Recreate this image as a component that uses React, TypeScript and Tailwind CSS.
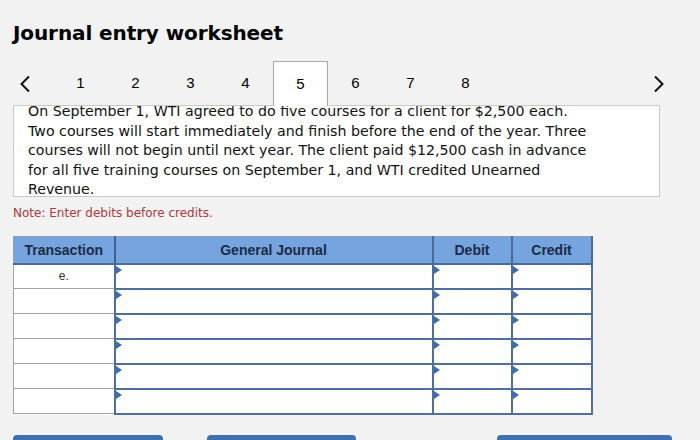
import React from "react";

const tabs = [1, 2, 3, 4, 5, 6, 7, 8];
const rows = ["e.", "", "", "", "", ""];

function Flag() {
  return (
    <span className="absolute left-0 top-[1px] w-0 h-0 border-y-[4px] border-y-transparent border-l-[6px] border-l-[#3b6bb0]" />
  );
}

export default function App() {
  return (
    <div className="w-[700px] h-[440px] overflow-hidden bg-[#f2f2f2] px-[13px] pt-[20px] text-black">
      {/* Title */}
      <h1 className="font-['DejaVu_Sans',sans-serif] font-bold text-[20px] leading-[26px] tracking-[-0.1px]">
        Journal entry worksheet
      </h1>

      {/* Step tabs */}
      <div className="mt-[15px] flex items-end h-[44px] font-['Liberation_Sans',Arial,sans-serif] text-[15px]">
        <div className="w-[40px] h-[44px] flex items-center pl-[6px]">
          <svg width="12" height="18" viewBox="0 0 12 18" className="mt-[2px]">
            <path d="M10 1.5 L2.5 9 L10 16.5" fill="none" stroke="#111" strokeWidth="2" />
          </svg>
        </div>
        {tabs.map((t) =>
          t === 5 ? (
            <div
              key={t}
              className="relative z-10 w-[55px] h-[45px] -mb-[1px] bg-white border border-b-0 border-[#a9a9a9] flex items-center justify-center"
            >
              {t}
            </div>
          ) : (
            <div key={t} className="w-[55px] h-[44px] flex items-center justify-center">
              {t}
            </div>
          )
        )}
        <div className="flex-1" />
        <div className="w-[40px] h-[44px] flex items-center justify-end pr-[22px]">
          <svg width="12" height="18" viewBox="0 0 12 18" className="mt-[2px] shrink-0">
            <path d="M2 1.5 L9.5 9 L2 16.5" fill="none" stroke="#111" strokeWidth="2" />
          </svg>
        </div>
      </div>

      {/* Problem text */}
      <div className="w-[647px] h-[92px] overflow-hidden bg-white border border-[#c9c9c9] pl-[14px] font-['DejaVu_Sans',Verdana,sans-serif] text-[14.2px] leading-[19.5px] text-[#111]">
        <p className="-mt-[4px]">
          On September 1, WTI agreed to do five courses for a client for $2,500 each.
          <br />
          Two courses will start immediately and finish before the end of the year. Three
          <br />
          courses will not begin until next year. The client paid $12,500 cash in advance
          <br />
          for all five training courses on September 1, and WTI credited Unearned
          <br />
          Revenue.
        </p>
      </div>

      <p className="mt-[8px] font-['DejaVu_Sans',Verdana,sans-serif] text-[12px] leading-[16px] text-[#b0373a]">
        Note: Enter debits before credits.
      </p>

      {/* Journal table */}
      <table className="mt-[15px] border-collapse bg-white font-['Liberation_Sans',Arial,sans-serif] text-[14px]">
        <thead>
          <tr className="h-[27px] bg-[#76a4de] text-[#1c2b47] font-bold">
            <th className="w-[101px] pt-[2px] border border-[#8aa0bd] border-b-2 border-b-[#4a6a98] border-r-2 border-r-[#3f5f8e] font-bold">
              Transaction
            </th>
            <th className="w-[318px] pt-[2px] border-2 border-[#4a6a98] border-t border-t-[#8aa0bd] font-bold">
              General Journal
            </th>
            <th className="w-[79px] pt-[2px] border-2 border-[#4a6a98] border-t border-t-[#8aa0bd] font-bold">
              Debit
            </th>
            <th className="w-[80px] pt-[2px] border-2 border-[#4a6a98] border-t border-t-[#8aa0bd] font-bold">
              Credit
            </th>
          </tr>
        </thead>
        <tbody>
          {rows.map((r, i) => (
            <tr key={i} className="h-[25px]">
              <td className="border border-[#a2a2a2] text-center text-[12px] text-[#333] align-middle">
                {r}
              </td>
              <td className="relative border-2 border-[#4f6e9c] p-0">
                <Flag />
              </td>
              <td className="relative border-2 border-[#4f6e9c] p-0">
                <Flag />
              </td>
              <td className="relative border-2 border-[#4f6e9c] p-0">
                <Flag />
              </td>
            </tr>
          ))}
        </tbody>
      </table>

      {/* Bottom buttons */}
      <div className="mt-[20px] flex">
        <div className="w-[150px] h-[20px] rounded-t-[4px] bg-[#3d71b3]" />
        <div className="ml-[44px] w-[149px] h-[20px] rounded-t-[4px] bg-[#3d71b3]" />
        <div className="ml-[141px] w-[175px] h-[20px] rounded-t-[4px] bg-[#3d71b3]" />
      </div>
    </div>
  );
}
